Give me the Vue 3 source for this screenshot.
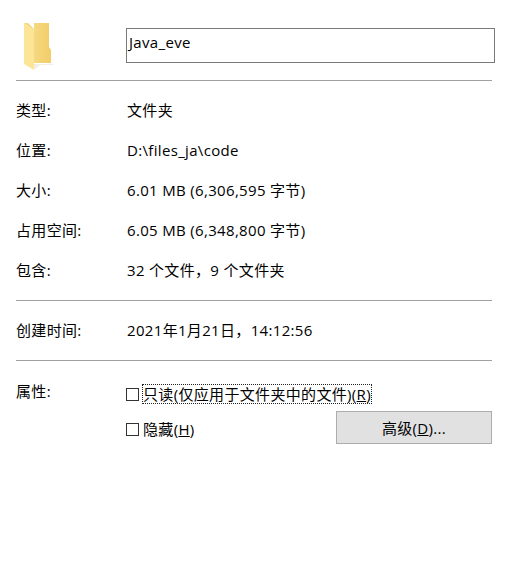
<template>
  <main class="dialog">
    <section class="head">
      <div class="label-col">
        <svg class="folder" width="30" height="48" viewBox="0 0 30 48">
          <defs>
            <linearGradient id="back" x1="0" y1="0" x2="1" y2="0">
              <stop offset="0" stop-color="#f8df90" />
              <stop offset="1" stop-color="#f2cd68" />
            </linearGradient>
          </defs>
          <path d="M10 41H29V42H16L10 47Z" fill="#f1eee4" />
          <path d="M0 0H25V24L27 27V40H10V0Z" fill="url(#back)" />
          <path d="M0 0L10 7V47L0 41Z" fill="#fde598" />
          <path d="M0 0H4L10 6V7Z" fill="#f6d67c" />
        </svg>
      </div>
      <div class="name-box">{{ name }}</div>
    </section>
    <hr />
    <section class="rows">
      <div v-for="row in info" :key="row.label" class="row">
        <span class="label-col">{{ row.label }}</span>
        <span class="value">{{ row.value }}</span>
      </div>
    </section>
    <hr />
    <section class="rows">
      <div class="row">
        <span class="label-col">创建时间:</span>
        <span class="value">2021年1月21日，14:12:56</span>
      </div>
    </section>
    <hr />
    <section class="attrs">
      <span class="label-col attr-label">属性:</span>
      <div class="attr-body">
        <label class="check">
          <i class="box"></i>
          <span class="focus">只读(仅应用于文件夹中的文件)(<u>R</u>)</span>
        </label>
        <div class="attr-bottom">
          <label class="check hidden-opt">
            <i class="box"></i>
            <span class="plain">隐藏(<u>H</u>)</span>
          </label>
          <button class="advanced">高级(<u>D</u>)...</button>
        </div>
      </div>
    </section>
  </main>
</template>

<script setup>
const name = "Java_eve";

const info = [
  { label: "类型:", value: "文件夹" },
  { label: "位置:", value: "D:\\files_ja\\code" },
  { label: "大小:", value: "6.01 MB (6,306,595 字节)" },
  { label: "占用空间:", value: "6.05 MB (6,348,800 字节)" },
  { label: "包含:", value: "32 个文件，9 个文件夹" },
];
</script>

<style>
html,
body {
  background: #ffffff;
}
</style>

<style scoped>
.dialog {
  box-sizing: border-box;
  width: 511px;
  height: 585px;
  padding: 20px 19px 0 16px;
  background: #ffffff;
  color: #000000;
  font-family: "Open Sans", "Noto Sans CJK SC", sans-serif;
  font-size: 15px;
  letter-spacing: 0.33px;
  line-height: 20px;
}

hr {
  height: 1px;
  margin: 0;
  border: 0;
  background: #a0a0a0;
}

.head {
  display: flex;
  height: 60px;
}

.label-col {
  flex: none;
  width: 110px;
}

.folder {
  display: block;
  margin: 3px 0 0 8px;
}

.name-box {
  flex: none;
  box-sizing: border-box;
  width: 369px;
  height: 35px;
  margin-top: 8px;
  padding: 3px 2px;
  border: 1px solid #7a7a7a;
}

.rows {
  display: flex;
  flex-direction: column;
  gap: 20px;
  padding: 19px 0 20px;
}

.row {
  display: flex;
  align-items: center;
  height: 20px;
}

.value {
  margin-left: 1px;
}

.attrs {
  display: flex;
  padding-top: 20px;
}

.attr-body {
  flex: 1;
  display: flex;
  flex-direction: column;
  padding-top: 3px;
}

.check {
  display: flex;
  align-items: center;
  gap: 3px;
}

.box {
  box-sizing: border-box;
  display: block;
  width: 13px;
  height: 13px;
  border: 1px solid #333333;
}

.focus {
  padding: 0 1px;
  outline: 1px dotted #222222;
  outline-offset: -1px;
}

.plain {
  padding: 0 1px;
}

.attr-bottom {
  display: flex;
  align-items: flex-start;
  justify-content: space-between;
  margin-top: 7px;
}

.hidden-opt {
  margin-top: 8px;
}

.advanced {
  box-sizing: border-box;
  width: 156px;
  height: 33px;
  padding: 0;
  border: 1px solid #adadad;
  background: #e1e1e1;
  color: #000000;
  font: inherit;
  letter-spacing: inherit;
}
</style>
